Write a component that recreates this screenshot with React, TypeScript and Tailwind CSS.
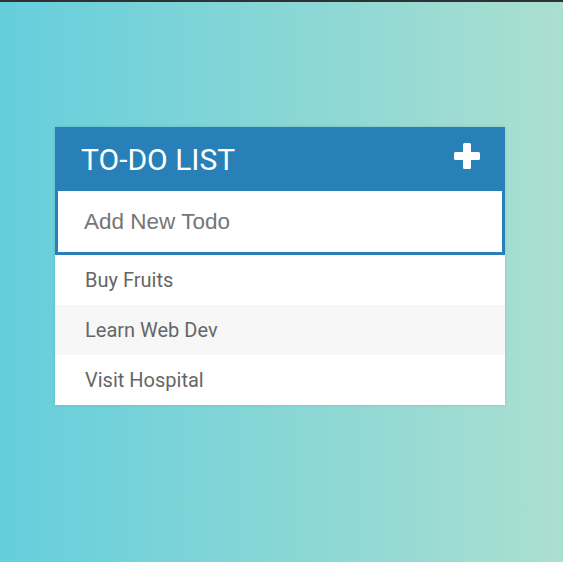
import React, { useState } from 'react';

const todos = ['Buy Fruits', 'Learn Web Dev', 'Visit Hospital'];

const PlusIcon: React.FC = () => (
  <svg width="26" height="26" viewBox="0 0 26 26" fill="#ffffff">
    <rect x="9" y="0" width="8" height="26" rx="1.5" />
    <rect x="0" y="9" width="26" height="8" rx="1.5" />
  </svg>
);

export default function App() {
  const [value, setValue] = useState('');

  return (
    <div className="min-h-[562px] w-full bg-[linear-gradient(90deg,#65cedc,#abdfd0)] border-t-2 border-[#2f3234]" style={{ fontFamily: 'Roboto, "Noto Sans", sans-serif' }}>
      <div className="pt-[125px] pl-[55px]">
        <div className="w-[450px] bg-white shadow-[0_0_3px_rgba(0,0,0,0.12)]">
          <div className="h-[64px] bg-[#2980b9] flex items-center justify-between pl-[26px] pr-[25px]">
            <h1 className="text-[30px] text-white font-normal leading-none pt-[1px]">TO-DO LIST</h1>
            <div className="-mt-[7px]">
              <PlusIcon />
            </div>
          </div>
          <input
            value={value}
            onChange={(e) => setValue(e.target.value)}
            placeholder="Add New Todo"
            autoFocus
            className="block w-full h-[64px] border-[3px] border-t-0 border-[#2980b9] pl-[26px] text-[22.5px] text-[#666] placeholder:text-[#767676] outline-none caret-[#2980b9]"
            style={{ fontFamily: '"Liberation Sans", Arial, sans-serif' }}
          />
          <ul>
            {todos.map((t, i) => (
              <li
                key={t}
                className={`h-[50px] flex items-center pl-[30px] text-[20px] text-[#666] ${i % 2 === 1 ? 'bg-[#f7f7f7]' : 'bg-white'}`}
              >
                {t}
              </li>
            ))}
          </ul>
        </div>
      </div>
    </div>
  );
}
